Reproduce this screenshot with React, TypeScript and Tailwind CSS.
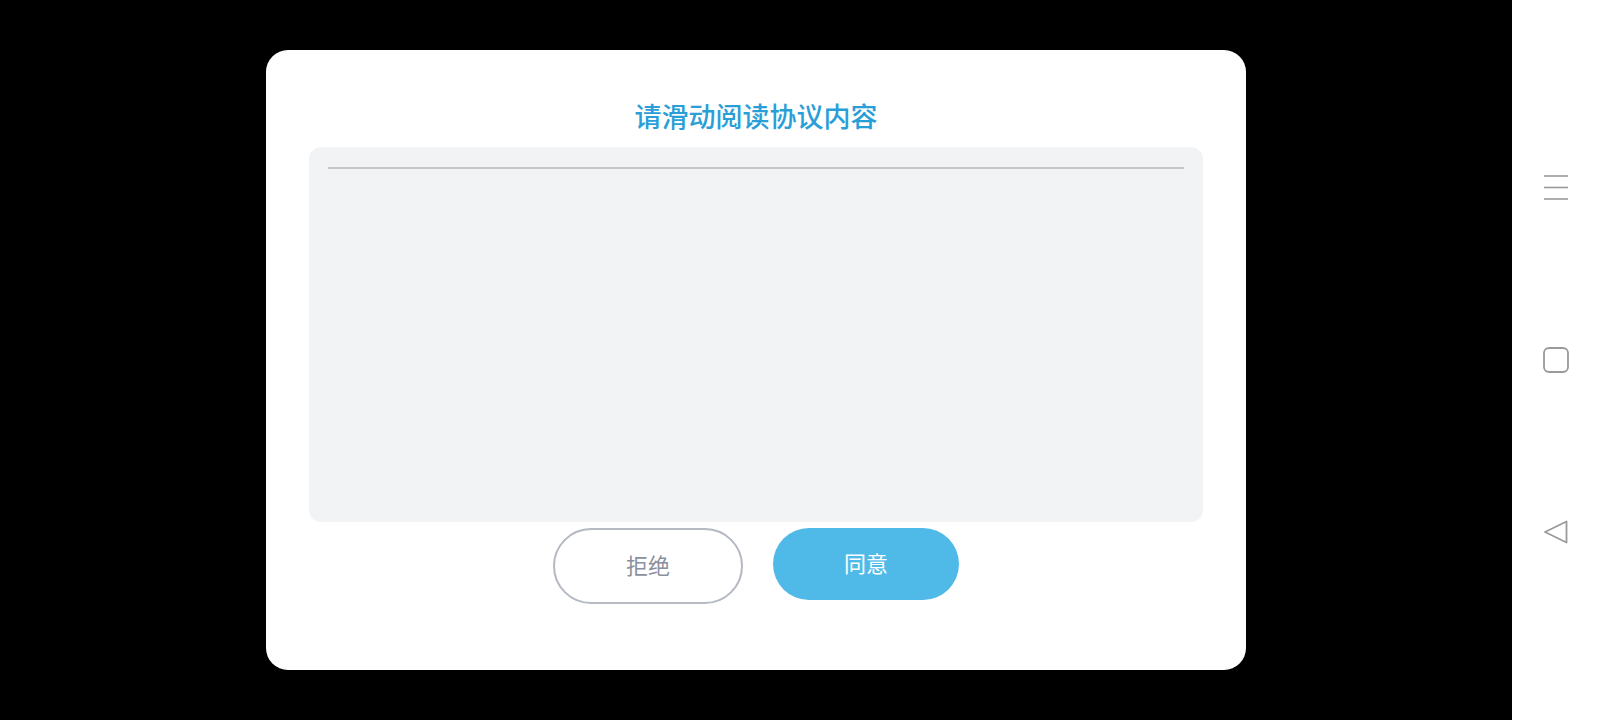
import React from "react";

export default function App() {
  return (
    <div
      className="flex h-[720px] w-[1600px] overflow-hidden"
      style={{ fontFamily: '"Noto Sans CJK SC", "Noto Sans", sans-serif' }}
    >
      <div className="flex flex-1 items-center justify-center bg-black">
        <div className="flex h-[620px] w-[980px] flex-col items-center rounded-[22px] bg-white pt-[50px]">
          <h1 className="mb-[15px] text-[27px] font-medium leading-[32px] text-[#2a9ed7]">
            请滑动阅读协议内容
          </h1>
          <div className="h-[375px] w-[894px] rounded-[12px] bg-[#f2f3f5] pt-[20px]">
            <div className="mx-[19px] h-[2px] bg-[#c3c6cb]" />
          </div>
          <div className="mt-[6px] flex items-start gap-[30px]">
            <button className="h-[76px] w-[190px] rounded-full border-2 border-[#b4b9c2] bg-white pb-[4px] text-[22px] leading-[28px] text-[#8a909c]">
              拒绝
            </button>
            <button className="h-[72px] w-[186px] rounded-full bg-[#4fbae8] pb-[4px] text-[22px] leading-[28px] text-white">
              同意
            </button>
          </div>
        </div>
      </div>
      <div className="flex w-[88px] flex-col items-center bg-white">
        <svg className="mt-[174px]" width="26" height="28" viewBox="0 0 26 28">
          <line x1="1" y1="2" x2="25" y2="2" stroke="#9a9a9a" strokeWidth="1.6" />
          <line x1="1" y1="13.5" x2="25" y2="13.5" stroke="#9a9a9a" strokeWidth="1.6" />
          <line x1="1" y1="25" x2="25" y2="25" stroke="#9a9a9a" strokeWidth="1.6" />
        </svg>
        <svg className="mt-[145px]" width="26" height="26" viewBox="0 0 26 26">
          <rect x="1" y="1" width="24" height="24" rx="5" fill="none" stroke="#9a9a9a" strokeWidth="1.8" />
        </svg>
        <svg className="mt-[146px]" width="26" height="26" viewBox="0 0 26 26">
          <path
            d="M23.5 2.5 L2 13 L23.5 23.5 Z"
            fill="none"
            stroke="#9a9a9a"
            strokeWidth="1.8"
            strokeLinejoin="round"
          />
        </svg>
      </div>
    </div>
  );
}
